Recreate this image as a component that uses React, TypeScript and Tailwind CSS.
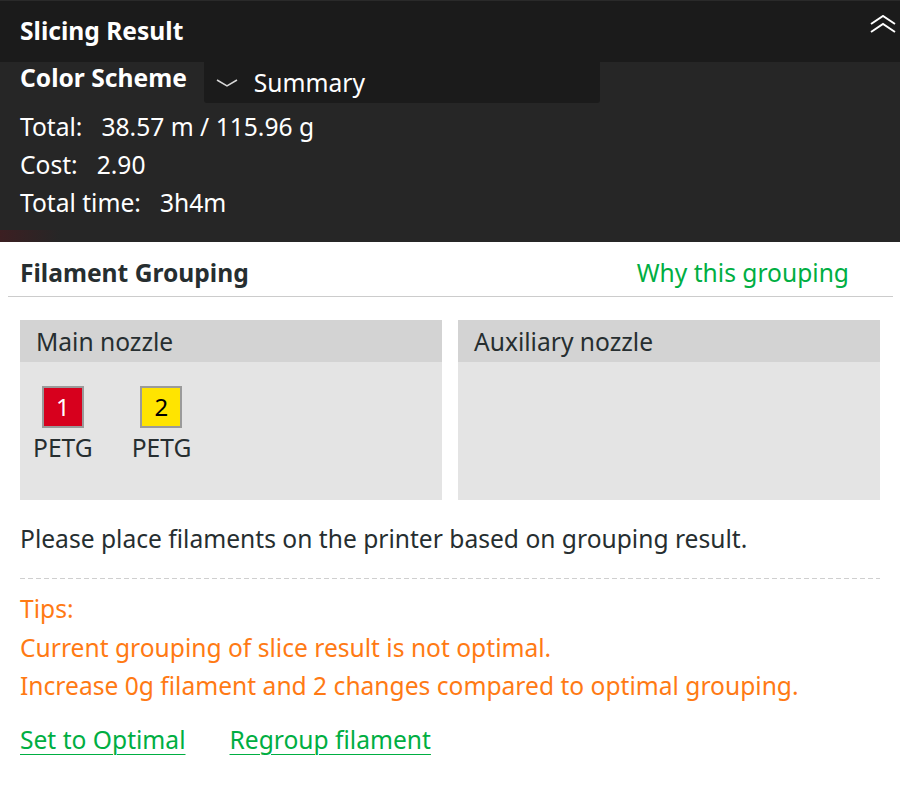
import React from 'react';

const font = { fontFamily: '"Noto Sans", "Open Sans", sans-serif' };

type Filament = { id: number; color: string; text: string; type: string };

const mainFilaments: Filament[] = [
  { id: 1, color: 'bg-[#d7001d]', text: 'text-white', type: 'PETG' },
  { id: 2, color: 'bg-[#ffe400]', text: 'text-black', type: 'PETG' },
];

const DoubleChevronUp = () => (
  <svg width="26" height="18" viewBox="0 0 26 18" fill="none" stroke="white" strokeWidth="2">
    <path d="M1 9 L13 1 L25 9" />
    <path d="M1 17 L13 9 L25 17" />
  </svg>
);

const ChevronDown = () => (
  <svg width="22" height="10" viewBox="0 0 22 10" fill="none" stroke="#d8d8d8" strokeWidth="1.5">
    <path d="M1 2 L11 8 L21 2" />
  </svg>
);

const NozzlePanel: React.FC<{ title: string; items: Filament[] }> = ({ title, items }) => (
  <div className="flex-1 h-[180px] bg-[#e4e4e4] flex flex-col">
    <div className="h-[42px] bg-[#d3d3d3] flex items-center pl-4 pt-[3px] text-[24.6px] text-[#262e30]">{title}</div>
    <div className="flex gap-[39px] pl-[13px] pt-[24px]">
      {items.map((f) => (
        <div key={f.id} className="flex flex-col items-center">
          <div
            className={`w-[42px] h-[42px] border-2 border-[#9a9a9a] flex items-center justify-center text-[24px] leading-none ${f.color} ${f.text}`}
          >
            {f.id}
          </div>
          <div className="text-[24.6px] leading-[36px] mt-[2px] text-[#262e30]">{f.type}</div>
        </div>
      ))}
    </div>
  </div>
);

const StatRow: React.FC<{ label: string; value: string }> = ({ label, value }) => (
  <div className="flex gap-[19px]">
    <span>{label}</span>
    <span>{value}</span>
  </div>
);

export default function App() {
  return (
    <div className="w-[900px] h-[810px] bg-white overflow-hidden" style={font}>
      {/* dark summary header */}
      <div className="bg-[#1b1b1b] border-t border-[#2a2a2a] h-[62px] flex items-center justify-between pl-5 pr-1">
        <span className="text-white font-bold text-[24.6px]">Slicing Result</span>
        <span className="self-start mt-[14px]">
          <DoubleChevronUp />
        </span>
      </div>
      <div className="relative bg-[#262626] h-[180px] pl-5 overflow-hidden">
        <div className="flex items-start">
          <span className="text-white font-bold text-[24.6px] leading-[31px]">Color Scheme</span>
          <div className="ml-[17px] w-[396px] h-[41px] bg-[#1b1b1b] rounded-b-[3px] flex items-center pl-[12px]">
            <ChevronDown />
            <span className="ml-[16px] text-white text-[24.6px] mt-[2px]">Summary</span>
          </div>
        </div>
        <div className="mt-[5px] text-white text-[24.6px] leading-[38px]">
          <StatRow label="Total:" value="38.57 m / 115.96 g" />
          <StatRow label="Cost:" value="2.90" />
          <StatRow label="Total time:" value="3h4m" />
        </div>
        <div className="absolute left-0 bottom-0 w-[60px] h-[12px] bg-gradient-to-r from-[#4a1a1f] to-transparent opacity-60" />
      </div>

      {/* filament grouping */}
      <div className="flex items-center justify-between pl-5 pr-[51px] h-[54px] pt-[8px]">
        <span className="text-[24.6px] font-bold text-[#262e30]">Filament Grouping</span>
        <span className="text-[24.6px] text-[#00ae42]">Why this grouping</span>
      </div>
      <div className="ml-2 mr-[7px] h-px bg-[#cccccc]" />

      <div className="px-5 mt-[23px] flex gap-4">
        <NozzlePanel title="Main nozzle" items={mainFilaments} />
        <NozzlePanel title="Auxiliary nozzle" items={[]} />
      </div>

      <div className="px-5 mt-[20px] text-[24.6px] text-[#262e30] leading-[38px]">
        Please place filaments on the printer based on grouping result.
      </div>

      <div className="mx-5 mt-[20px] h-px bg-[repeating-linear-gradient(to_right,#cfcfcf_0_5px,transparent_5px_8px)]" />

      <div className="px-5 mt-[11px] text-[24.6px] text-[#ff7a14] leading-[38.5px]">
        <div>Tips:</div>
        <div>Current grouping of slice result is not optimal.</div>
        <div>Increase 0g filament and 2 changes compared to optimal grouping.</div>
      </div>

      <div className="px-5 mt-[16px] flex gap-[44px] text-[24.6px] text-[#00ae42]">
        <span className="underline underline-offset-[5px] decoration-1">Set to Optimal</span>
        <span className="underline underline-offset-[5px] decoration-1">Regroup filament</span>
      </div>
    </div>
  );
}
